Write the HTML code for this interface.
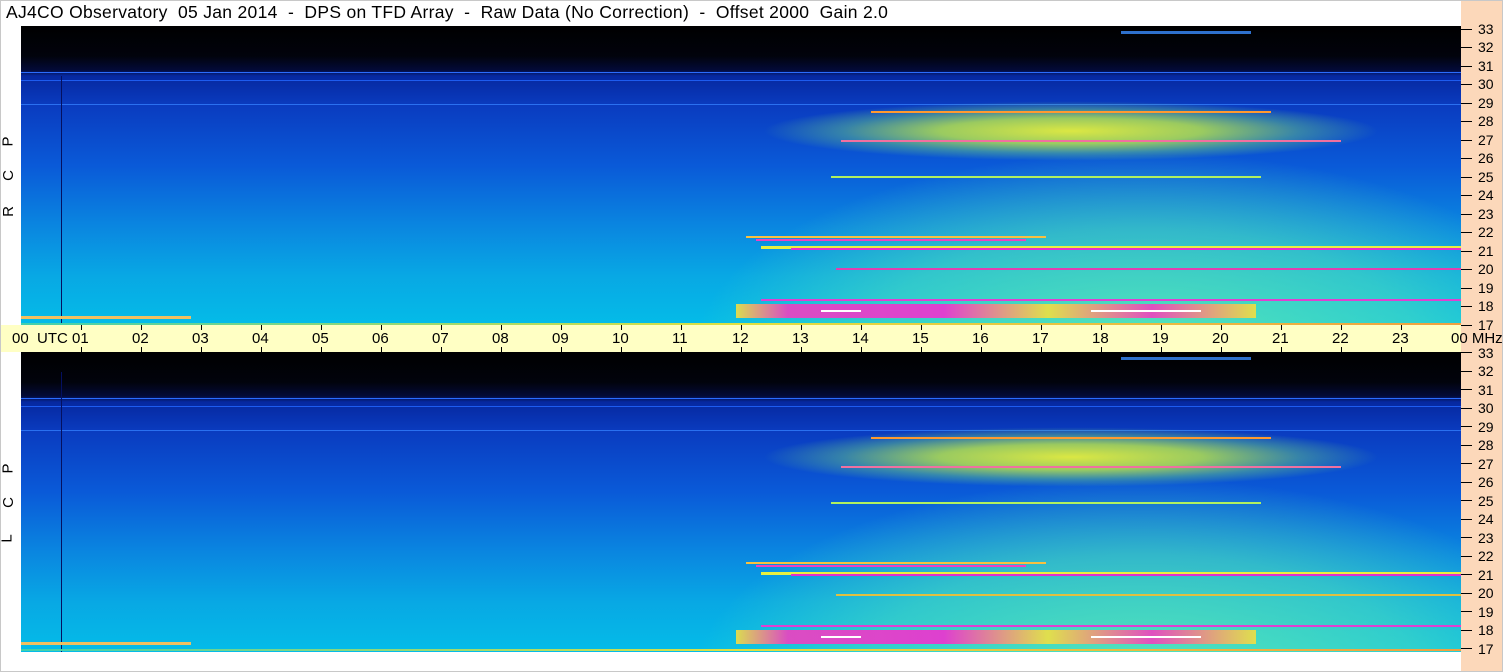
<!DOCTYPE html>
<html><head><meta charset="utf-8"><style>
*{margin:0;padding:0;box-sizing:border-box}
body{width:1503px;height:672px;background:#fff;position:relative;overflow:hidden;font-family:"Liberation Sans",sans-serif;color:#000}
.title{position:absolute;left:6px;top:2px;font-size:17.5px;white-space:pre;letter-spacing:0.3px}
.frame{position:absolute;left:0;top:0;width:1503px;height:672px;border:1px solid #c8c8c8}
.panel{position:absolute;left:21px;width:1440px;height:300px;overflow:hidden;
background:linear-gradient(to bottom,#000 0,#01030c 30px,#030a38 44px,#0628a0 50px,#0a3cc0 80px,#0a5ad8 140px,#0a86e0 200px,#08a8e4 250px,#04bce8 300px)}
.b{position:absolute}
.strip{position:absolute;left:1461px;top:0;width:42px;height:672px;background:#fcd8ba}
.axis{position:absolute;left:0;top:325px;width:1461px;height:27px;background:#ffffc4}
.tl{position:absolute;top:330px;font-size:15px}
.tk{position:absolute;width:1px;height:5px;background:#000}
.fl{position:absolute;left:1478px;font-size:14px}
.ft{position:absolute;left:1461px;width:11px;height:1px;background:#000}
.side{position:absolute;left:3px;font-size:15px;transform:rotate(-90deg)}
</style></head><body>
<div class="title">AJ4CO Observatory  05 Jan 2014  -  DPS on TFD Array  -  Raw Data (No Correction)  -  Offset 2000  Gain 2.0</div>
<div class="strip"></div>

<div class="panel" style="top:26px">
<div class="b" style="left:0;top:46px;width:1440px;height:1px;background:#2a6cff"></div>
<div class="b" style="left:0;top:54px;width:1440px;height:1px;background:#1e5cf0"></div>
<div class="b" style="left:0;top:78px;width:1440px;height:1px;background:#2a70f0"></div>
<div class="b" style="left:40px;top:50px;width:1px;height:250px;background:#041060"></div>
<div class="b" style="left:1100px;top:5px;width:130px;height:3px;background:#3a8cff;opacity:.8"></div>
<div class="b" style="left:680px;top:130px;width:800px;height:200px;background:radial-gradient(ellipse at 55% 100%,rgba(110,240,170,.8) 0,rgba(90,230,180,.5) 45%,rgba(80,220,190,0) 72%)"></div>
<div class="b" style="left:740px;top:75px;width:620px;height:60px;background:radial-gradient(ellipse at 50% 50%,rgba(230,240,60,.95) 0,rgba(190,235,70,.8) 30%,rgba(120,220,120,.4) 52%,rgba(80,200,170,0) 70%)"></div>
<div class="b" style="left:850px;top:85px;width:400px;height:2px;background:#ff9a30"></div>
<div class="b" style="left:820px;top:114px;width:500px;height:2px;background:#f070a0"></div>
<div class="b" style="left:810px;top:150px;width:430px;height:2px;background:#b0f060"></div>
<div class="b" style="left:725px;top:210px;width:300px;height:2px;background:#f8c040"></div>
<div class="b" style="left:735px;top:213px;width:270px;height:2px;background:#f040c0"></div>
<div class="b" style="left:740px;top:220px;width:700px;height:3px;background:#e8f040"></div>
<div class="b" style="left:770px;top:222px;width:670px;height:2px;background:#e030d0"></div>
<div class="b" style="left:815px;top:242px;width:625px;height:2px;background:#e040b0"></div>
<div class="b" style="left:740px;top:273px;width:700px;height:2px;background:#e040d0"></div>
<div class="b" style="left:715px;top:278px;width:520px;height:14px;background:linear-gradient(to right,#f0e040,#f040c0 10%,#f030d0 40%,#f0e040 60%,#f040c0 80%,#f0e040);opacity:.9"></div>
<div class="b" style="left:800px;top:284px;width:40px;height:2px;background:#fff"></div>
<div class="b" style="left:1070px;top:284px;width:110px;height:2px;background:#fff"></div>
<div class="b" style="left:0;top:290px;width:170px;height:3px;background:#f0c060"></div>
<div class="b" style="left:0;top:297px;width:1440px;height:2px;background:linear-gradient(to right,#40d0b0,#e0e040 50%,#f0a040)"></div>
</div>

<div class="panel" style="top:352px">
<div class="b" style="left:0;top:46px;width:1440px;height:1px;background:#2a6cff"></div>
<div class="b" style="left:0;top:54px;width:1440px;height:1px;background:#1e5cf0"></div>
<div class="b" style="left:0;top:78px;width:1440px;height:1px;background:#2a70f0"></div>
<div class="b" style="left:40px;top:20px;width:1px;height:280px;background:#041060"></div>
<div class="b" style="left:1100px;top:5px;width:130px;height:3px;background:#3a8cff;opacity:.8"></div>
<div class="b" style="left:680px;top:130px;width:800px;height:200px;background:radial-gradient(ellipse at 55% 100%,rgba(110,240,170,.8) 0,rgba(90,230,180,.5) 45%,rgba(80,220,190,0) 72%)"></div>
<div class="b" style="left:740px;top:75px;width:620px;height:60px;background:radial-gradient(ellipse at 50% 50%,rgba(230,240,60,.95) 0,rgba(190,235,70,.8) 30%,rgba(120,220,120,.4) 52%,rgba(80,200,170,0) 70%)"></div>
<div class="b" style="left:850px;top:85px;width:400px;height:2px;background:#ff9a30"></div>
<div class="b" style="left:820px;top:114px;width:500px;height:2px;background:#f070a0"></div>
<div class="b" style="left:810px;top:150px;width:430px;height:2px;background:#b0f060"></div>
<div class="b" style="left:725px;top:210px;width:300px;height:2px;background:#f8c040"></div>
<div class="b" style="left:735px;top:213px;width:270px;height:2px;background:#f040c0"></div>
<div class="b" style="left:740px;top:220px;width:700px;height:3px;background:#e8f040"></div>
<div class="b" style="left:770px;top:222px;width:670px;height:2px;background:#e030d0"></div>
<div class="b" style="left:815px;top:242px;width:625px;height:2px;background:#e0c040"></div>
<div class="b" style="left:740px;top:273px;width:700px;height:2px;background:#e040d0"></div>
<div class="b" style="left:715px;top:278px;width:520px;height:14px;background:linear-gradient(to right,#f0e040,#f040c0 10%,#f030d0 40%,#f0e040 60%,#f040c0 80%,#f0e040);opacity:.9"></div>
<div class="b" style="left:800px;top:284px;width:40px;height:2px;background:#fff"></div>
<div class="b" style="left:1070px;top:284px;width:110px;height:2px;background:#fff"></div>
<div class="b" style="left:0;top:290px;width:170px;height:3px;background:#f0c060"></div>
<div class="b" style="left:0;top:297px;width:1440px;height:2px;background:linear-gradient(to right,#40d0b0,#e0e040 50%,#f0a040)"></div>
</div>

<div class="axis"></div>
<div class="side" style="top:133px">P</div>
<div class="side" style="top:167px">C</div>
<div class="side" style="top:203px">R</div>
<div class="side" style="top:460px">P</div>
<div class="side" style="top:494px">C</div>
<div class="side" style="top:530px">L</div>

<div class="tl" style="left:12px">00&nbsp; UTC</div>
<div class="tl" style="left:72px">01</div><div class="tl" style="left:132px">02</div><div class="tl" style="left:192px">03</div><div class="tl" style="left:252px">04</div><div class="tl" style="left:312px">05</div><div class="tl" style="left:372px">06</div><div class="tl" style="left:432px">07</div><div class="tl" style="left:492px">08</div><div class="tl" style="left:552px">09</div><div class="tl" style="left:612px">10</div><div class="tl" style="left:672px">11</div><div class="tl" style="left:732px">12</div><div class="tl" style="left:792px">13</div><div class="tl" style="left:852px">14</div><div class="tl" style="left:912px">15</div><div class="tl" style="left:972px">16</div><div class="tl" style="left:1032px">17</div><div class="tl" style="left:1092px">18</div><div class="tl" style="left:1152px">19</div><div class="tl" style="left:1212px">20</div><div class="tl" style="left:1272px">21</div><div class="tl" style="left:1332px">22</div><div class="tl" style="left:1392px">23</div><div class="tl" style="left:1451px">00 MHz</div>

<div class="tk" style="left:81px;top:325px"></div><div class="tk" style="left:141px;top:325px"></div><div class="tk" style="left:201px;top:325px"></div><div class="tk" style="left:261px;top:325px"></div><div class="tk" style="left:321px;top:325px"></div><div class="tk" style="left:381px;top:325px"></div><div class="tk" style="left:441px;top:325px"></div><div class="tk" style="left:501px;top:325px"></div><div class="tk" style="left:561px;top:325px"></div><div class="tk" style="left:621px;top:325px"></div><div class="tk" style="left:681px;top:325px"></div><div class="tk" style="left:741px;top:325px"></div><div class="tk" style="left:801px;top:325px"></div><div class="tk" style="left:861px;top:325px"></div><div class="tk" style="left:921px;top:325px"></div><div class="tk" style="left:981px;top:325px"></div><div class="tk" style="left:1041px;top:325px"></div><div class="tk" style="left:1101px;top:325px"></div><div class="tk" style="left:1161px;top:325px"></div><div class="tk" style="left:1221px;top:325px"></div><div class="tk" style="left:1281px;top:325px"></div><div class="tk" style="left:1341px;top:325px"></div><div class="tk" style="left:1401px;top:325px"></div>
<div class="tk" style="left:81px;top:347px"></div><div class="tk" style="left:141px;top:347px"></div><div class="tk" style="left:201px;top:347px"></div><div class="tk" style="left:261px;top:347px"></div><div class="tk" style="left:321px;top:347px"></div><div class="tk" style="left:381px;top:347px"></div><div class="tk" style="left:441px;top:347px"></div><div class="tk" style="left:501px;top:347px"></div><div class="tk" style="left:561px;top:347px"></div><div class="tk" style="left:621px;top:347px"></div><div class="tk" style="left:681px;top:347px"></div><div class="tk" style="left:741px;top:347px"></div><div class="tk" style="left:801px;top:347px"></div><div class="tk" style="left:861px;top:347px"></div><div class="tk" style="left:921px;top:347px"></div><div class="tk" style="left:981px;top:347px"></div><div class="tk" style="left:1041px;top:347px"></div><div class="tk" style="left:1101px;top:347px"></div><div class="tk" style="left:1161px;top:347px"></div><div class="tk" style="left:1221px;top:347px"></div><div class="tk" style="left:1281px;top:347px"></div><div class="tk" style="left:1341px;top:347px"></div><div class="tk" style="left:1401px;top:347px"></div>

<div class="ft" style="top:29px"></div><div class="fl" style="top:21px">33</div>
<div class="ft" style="top:47px"></div><div class="fl" style="top:39px">32</div>
<div class="ft" style="top:66px"></div><div class="fl" style="top:58px">31</div>
<div class="ft" style="top:84px"></div><div class="fl" style="top:76px">30</div>
<div class="ft" style="top:103px"></div><div class="fl" style="top:95px">29</div>
<div class="ft" style="top:121px"></div><div class="fl" style="top:113px">28</div>
<div class="ft" style="top:140px"></div><div class="fl" style="top:132px">27</div>
<div class="ft" style="top:158px"></div><div class="fl" style="top:150px">26</div>
<div class="ft" style="top:177px"></div><div class="fl" style="top:169px">25</div>
<div class="ft" style="top:195px"></div><div class="fl" style="top:187px">24</div>
<div class="ft" style="top:214px"></div><div class="fl" style="top:206px">23</div>
<div class="ft" style="top:232px"></div><div class="fl" style="top:224px">22</div>
<div class="ft" style="top:251px"></div><div class="fl" style="top:243px">21</div>
<div class="ft" style="top:269px"></div><div class="fl" style="top:261px">20</div>
<div class="ft" style="top:288px"></div><div class="fl" style="top:280px">19</div>
<div class="ft" style="top:306px"></div><div class="fl" style="top:298px">18</div>
<div class="ft" style="top:325px"></div><div class="fl" style="top:317px">17</div>
<div class="ft" style="top:352px"></div><div class="fl" style="top:345px">33</div>
<div class="ft" style="top:371px"></div><div class="fl" style="top:363px">32</div>
<div class="ft" style="top:389px"></div><div class="fl" style="top:382px">31</div>
<div class="ft" style="top:408px"></div><div class="fl" style="top:400px">30</div>
<div class="ft" style="top:426px"></div><div class="fl" style="top:419px">29</div>
<div class="ft" style="top:445px"></div><div class="fl" style="top:437px">28</div>
<div class="ft" style="top:463px"></div><div class="fl" style="top:456px">27</div>
<div class="ft" style="top:482px"></div><div class="fl" style="top:474px">26</div>
<div class="ft" style="top:500px"></div><div class="fl" style="top:493px">25</div>
<div class="ft" style="top:519px"></div><div class="fl" style="top:511px">24</div>
<div class="ft" style="top:537px"></div><div class="fl" style="top:530px">23</div>
<div class="ft" style="top:556px"></div><div class="fl" style="top:548px">22</div>
<div class="ft" style="top:574px"></div><div class="fl" style="top:567px">21</div>
<div class="ft" style="top:593px"></div><div class="fl" style="top:585px">20</div>
<div class="ft" style="top:611px"></div><div class="fl" style="top:604px">19</div>
<div class="ft" style="top:630px"></div><div class="fl" style="top:622px">18</div>
<div class="ft" style="top:648px"></div><div class="fl" style="top:641px">17</div>
<div class="frame"></div>
</body></html>
